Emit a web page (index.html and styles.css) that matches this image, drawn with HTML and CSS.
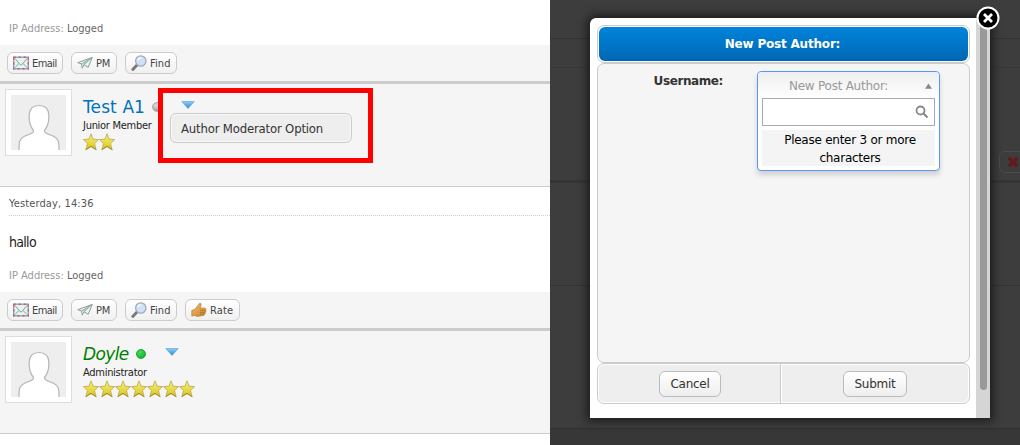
FILE: index.html
```html
<!DOCTYPE html>
<html lang="en">
<head>
<meta charset="utf-8">
<title>New Post Author</title>
<link rel="stylesheet" href="styles.css">
</head>
<body>
<svg class="defs" width="0" height="0" aria-hidden="true">
  <defs>
    <linearGradient id="gold" x1="0" y1="0" x2="0" y2="1"><stop offset="0" stop-color="#f7ee88"/><stop offset="1" stop-color="#d9c80e"/></linearGradient>
    <linearGradient id="blue" x1="0" y1="0" x2="0" y2="1"><stop offset="0" stop-color="#8fd0f5"/><stop offset="1" stop-color="#2484d8"/></linearGradient>
    <linearGradient id="skin" x1="0" y1="0" x2="1" y2="1"><stop offset="0" stop-color="#f2be68"/><stop offset="1" stop-color="#cc812d"/></linearGradient>
  </defs>
  <symbol id="mail" viewBox="0 0 16 13"><rect x="1" y="1" width="14" height="11" fill="#e6f3ef"/><path d="M2 2 7 8Q8 9 9 8L14 2M2 11 6 7M14 11 10 7" fill="none" stroke="#83a69c"/><rect x=".7" y=".7" width="14.600" height="11.600" fill="none" stroke="#79a8d0" stroke-width="1.400"/><rect x=".7" y=".7" width="14.600" height="11.600" fill="none" stroke="#ee4850" stroke-width="1.400" stroke-dasharray="2 3"/></symbol>
  <symbol id="plane" viewBox="0 0 16 13"><path d="M.7 6.200 15.300.9 11.200 10.800 7 8.300 5.200 11.700 4.600 7.400z" fill="#edf5f2" stroke="#8a9f9a"/><path d="M4.600 7.400 15 1 7 8.300" fill="#b9ceca" stroke="#8a9f9a" stroke-width=".8"/></symbol>
  <symbol id="find" viewBox="0 0 16 16"><path d="M6 10 1.800 14.500" stroke="#777" stroke-width="2.800" stroke-linecap="round"/><circle cx="9.800" cy="6" r="5.200" fill="#cfe1f8" stroke="#a3a9b8" stroke-width="1.300"/><path d="M6.700 5q1-2.300 3.500-2" fill="none" stroke="#fff" stroke-width="1.300"/></symbol>
  <symbol id="thumb" viewBox="0 0 16 16"><path d="M.8 8.500 4 7.200 8.700 1.200q2 .1 1.300 2.300L8.900 6l5.200.2q1.500.7.600 2 .8 1-.3 2 .3 1.200-.8 1.800 0 1.200-1.300 1.500L6 14.400l-2.300-1L.8 14z" fill="url(#skin)" stroke="#b87a30" stroke-width=".7"/><path d="M9 8.500h5M9 10.500h4.500M9 12.200h4" stroke="#ad7026" stroke-width=".7"/></symbol>
  <symbol id="star" viewBox="0 0 16 18"><path d="M8 .8 10.100 6.200 15.600 6.600 11.500 10.600 13.200 16.800 8 13.600 2.800 16.800 4.500 10.600.4 6.600 5.900 6.200z" fill="url(#gold)" stroke="#c3ae50" stroke-width=".9"/><path d="M2.800 16.600 8 13.300l5.200 3.300" fill="none" stroke="#8e782e" stroke-width=".8"/></symbol>
  <symbol id="person" viewBox="0 0 55 55"><rect width="55" height="55" fill="#eee"/><path d="M8 56C8 47 8 44 13 41.500C17 39.300 23 39 22.500 35.500C18 30 18 24 18.200 20C18.500 14 22 10.500 28 10.500S37.500 14 37.800 20C38 24 38 30 33.500 35.500C33 39 39 39.300 43 41.500C48 44 48 47 48 56z" fill="#fff" stroke="#b5b5b5" stroke-width="1.200"/></symbol>
  <symbol id="down" viewBox="0 0 14 8"><path d="M.8.600H13.200L7 7.500z" fill="url(#blue)" stroke="#59a8de" stroke-width=".7"/></symbol>
</svg>
<div class="screen">
  <main class="thread">
    <section class="body first"><p class="ip">IP Address: <b>Logged</b></p></section>
    <div class="actions">
      <span class="btn email"><svg><use href="#mail"/></svg><i>Email</i></span>
      <span class="btn pm"><svg><use href="#plane"/></svg><i>PM</i></span>
      <span class="btn search"><svg><use href="#find"/></svg><i>Find</i></span>
    </div>
    <section class="author">
      <div class="avatar"><svg><use href="#person"/></svg></div>
      <div class="info">
        <div class="name-row"><span class="name">Test A1</span><span class="dot off"></span></div>
        <div class="rank">Junior Member</div>
        <div class="stars"><svg><use href="#star"/></svg><svg><use href="#star"/></svg></div>
      </div>
      <div class="callout"><svg class="arrow"><use href="#down"/></svg><div class="option"><span>Author Moderator Option</span></div></div>
    </section>
    <section class="body second">
      <div class="date"><span>Yesterday, 14:36</span></div>
      <p class="message">hallo</p>
      <p class="ip">IP Address: <b>Logged</b></p>
    </section>
    <div class="actions">
      <span class="btn email"><svg><use href="#mail"/></svg><i>Email</i></span>
      <span class="btn pm"><svg><use href="#plane"/></svg><i>PM</i></span>
      <span class="btn search"><svg><use href="#find"/></svg><i>Find</i></span>
      <span class="btn rate"><svg><use href="#thumb"/></svg><i>Rate</i></span>
    </div>
    <section class="author">
      <div class="avatar"><svg><use href="#person"/></svg></div>
      <div class="info admin">
        <div class="name-row"><span class="name">Doyle</span><span class="dot on"></span><svg class="arrow"><use href="#down"/></svg></div>
        <div class="rank">Administrator</div>
        <div class="stars"><svg><use href="#star"/></svg><svg><use href="#star"/></svg><svg><use href="#star"/></svg><svg><use href="#star"/></svg><svg><use href="#star"/></svg><svg><use href="#star"/></svg><svg><use href="#star"/></svg></div>
      </div>
    </section>
  </main>
  <aside class="overlay">
    <div class="shade s1"></div><div class="shade s2"></div><div class="shade s3"></div><div class="shade s4"></div><div class="shade s5"></div>
    <div class="delete"><svg viewBox="0 0 14 14"><path d="M2 2 12 12M12 2 2 12" stroke="#641a1a" stroke-width="4"/></svg></div>
    <div class="modal">
      <div class="content">
        <h1><span>New Post Author:</span></h1>
        <div class="form">
          <label><span>Username:</span></label>
          <div class="select">
            <div class="chosen"><span>New Post Author:</span><svg viewBox="0 0 8 6"><path d="M0 6 4 0 8 6z" fill="#888"/></svg></div>
            <div class="input"><svg viewBox="0 0 14 14"><circle cx="5.500" cy="5.500" r="4" fill="none" stroke="#888" stroke-width="1.800"/><path d="M8.500 8.500 12.500 12.500" stroke="#888" stroke-width="2.200"/></svg></div>
            <div class="hint">Please enter 3 or more<br>characters</div>
          </div>
        </div>
        <div class="footer"><div class="left"><span class="formbtn cancel">Cancel</span></div><div class="right"><span class="formbtn submit">Submit</span></div></div>
      </div>
      <div class="scroll"><div class="thumb"></div></div>
      <svg class="close" viewBox="0 0 26 26"><circle cx="13" cy="13" r="10.500" fill="#000" stroke="#fff" stroke-width="2"/><path d="M9 9 17 17M17 9 9 17" stroke="#fff" stroke-width="2.800"/></svg>
    </div>
  </aside>
</div>
</body>
</html>
```
FILE: styles.css
```css
* { box-sizing: border-box; }
body { margin: 0; font-family: "DejaVu Sans Condensed", "DejaVu Sans", sans-serif; font-stretch: condensed; font-size: 11px; color: #333; }
i, b { font-style: normal; font-weight: normal; }
p, h1 { margin: 0; }
svg { display: block; flex: none; }
.defs { position: absolute; }
.screen { display: flex; width: 1020px; height: 445px; overflow: hidden; }
.thread { width: 550px; background: #fff; white-space: nowrap; }
.body { padding: 0 0 0 9px; }
.first { height: 45px; padding-top: 21px; }
.ip { color: #999; line-height: 16px; }
.ip b { color: #666; }
.actions { height: 39px; display: flex; gap: 8px; padding: 7px 0 0 7px; background: #f5f5f5; border-bottom: 3px solid #ccc; }
.btn { height: 22px; display: flex; align-items: center; gap: 3px; padding: 0 0 0 5px; border: 1px solid #ccc; border-radius: 6px; background: linear-gradient(#fff, #f0f0f0); color: #444; letter-spacing: -.2px; }
.btn svg { width: 16px; height: 16px; }
.email { width: 56px; letter-spacing: -.55px; }
.pm { width: 46px; }
.search { width: 52px; letter-spacing: .1px; }
.rate { width: 55px; letter-spacing: .1px; }
.author { height: 103px; display: flex; position: relative; background: #f5f5f5; border-bottom: 1px solid #ccc; padding: 5px 0 0 5px; }
.avatar { width: 67px; height: 67px; padding: 5px; border: 1px solid #ddd; background: #fff; }
.avatar svg { width: 55px; height: 55px; }
.info { padding: 6px 0 0 11px; }
.name-row { height: 24px; display: flex; align-items: center; gap: 7px; }
.name { color: #0072bc; font-family: "DejaVu Sans", sans-serif; font-stretch: normal; font-size: 17px; letter-spacing: .1px; }
.admin .name { color: #008000; font-style: italic; letter-spacing: -.6px; }
.dot { width: 10px; height: 10px; border-radius: 50%; border: 1px solid #aaa; background: radial-gradient(circle at 35% 30%, #ddd, #888); }
.on { border-color: #18a52c; background: radial-gradient(circle at 35% 30%, #46dc58, #0aa82a); }
.rank { color: #222; line-height: 13px; letter-spacing: -.28px; }
.stars { display: flex; padding-top: 1px; }
.stars svg { width: 16px; height: 18px; }
.arrow { width: 14px; height: 8px; }
.admin .arrow { margin: -5px 0 0 12px; }
.callout { position: absolute; left: 158px; top: 4px; width: 215px; height: 75px; border: 5px solid #f00; padding: 8px 16px 0 7px; background: #f5f5f5; }
.callout .arrow { margin-left: 11px; }
.option { height: 30px; margin-top: 4px; padding-left: 10px; border: 1px solid #ccc; border-radius: 6px; background: #eee; box-shadow: inset 0 0 0 1px #f9f9f9; font-size: 13px; line-height: 29px; letter-spacing: -.18px; }
.second { height: 105px; }
.date { height: 29px; line-height: 33px; border-bottom: 1px dotted #ccc; color: #555; letter-spacing: .12px; }
.message { padding-top: 17px; font-size: 14px; line-height: 18px; letter-spacing: -.7px; color: #222; }
.second .ip { padding-top: 17px; }
.overlay { width: 470px; position: relative; background: #3d3d3d; }
.shade { position: absolute; left: 0; right: 0; height: 1px; background: #333; }
.s1 { top: 38px; }
.s2 { top: 67px; background: #383838; }
.s3 { top: 180px; height: 3px; background: #343434; }
.s4 { top: 285px; }
.s5 { top: 428px; height: 17px; background: #373737; border-top: 1px solid #303030; }
.delete { position: absolute; left: 449px; top: 151px; width: 40px; height: 22px; border: 1px solid #4b4b4b; border-radius: 6px; padding: 4px 7px; }
.delete svg { width: 12px; height: 12px; }
.modal { position: absolute; left: 40px; top: 18px; width: 400px; height: 400px; display: flex; background: #fff; border-radius: 6px 6px 0 0; box-shadow: 0 0 10px 3px #1b1b1b; font-family: "DejaVu Sans", sans-serif; font-stretch: normal; }
.content { width: 386px; padding: 7px 6px 0 7px; }
h1 { height: 38px; border: 1px solid #ccc; border-radius: 7px; padding: 1px; color: #fff; font-size: 12px; font-weight: bold; line-height: 34px; text-align: center; letter-spacing: -.2px; }
h1 span { display: block; padding-right: 2px; border-radius: 6px; background: linear-gradient(#0084dc, #0067b3); }
.form { height: 300px; display: flex; border: 1px solid #ccc; border-radius: 7px; background: #f5f5f5; padding: 7px 0 0; }
label { width: 159px; padding: 3px 34px 0 0; text-align: right; font-size: 12px; font-weight: bold; line-height: 14px; letter-spacing: -.4px; }
.select { width: 183px; height: 100px; background: #fff; border: 1px solid #5897fb; border-radius: 4px; box-shadow: 0 4px 5px rgba(0,0,0,.15); }
.chosen { height: 26px; padding: 1px 7px 0 31px; display: flex; align-items: center; justify-content: space-between; background: linear-gradient(#eee, #fff); color: #999; font-size: 12px; letter-spacing: -.25px; border-radius: 4px 4px 0 0; }
.chosen svg { width: 7px; height: 6px; }
.input { height: 28px; margin: 0 4px; padding: 6px 5px; border: 1px solid #aaa; background: #fff; display: flex; justify-content: flex-end; }
.input svg { width: 14px; height: 14px; }
.hint { height: 36px; margin: 4px 4px 0; padding: 1px 0 0 3px; background: #f4f4f4; color: #000; font-size: 12px; line-height: 18px; text-align: center; letter-spacing: -.25px; }
.footer { height: 41px; display: flex; border: 1px solid #ccc; border-radius: 7px; background: #eee; box-shadow: inset 0 0 0 1px #fff; }
.footer > div { padding-top: 7px; }
.left { width: 182px; padding-left: 61px; }
.right { flex: 1; padding-left: 62px; border-left: 1px solid #ccc; box-shadow: inset 1px 0 #fff; }
.formbtn { display: block; height: 26px; border: 1px solid #bbb; border-radius: 6px; background: linear-gradient(#fff, #eee); font-size: 12px; line-height: 25px; text-align: center; letter-spacing: -.25px; }
.cancel { width: 62px; }
.submit { width: 64px; }
.scroll { width: 14px; background: #d5d5d5; padding: 0 3px 0 4px; }
.thumb { height: 372px; background: #999; border-radius: 0 0 4px 4px; }
.close { position: absolute; left: 385px; top: -13px; width: 26px; height: 26px; }
```
